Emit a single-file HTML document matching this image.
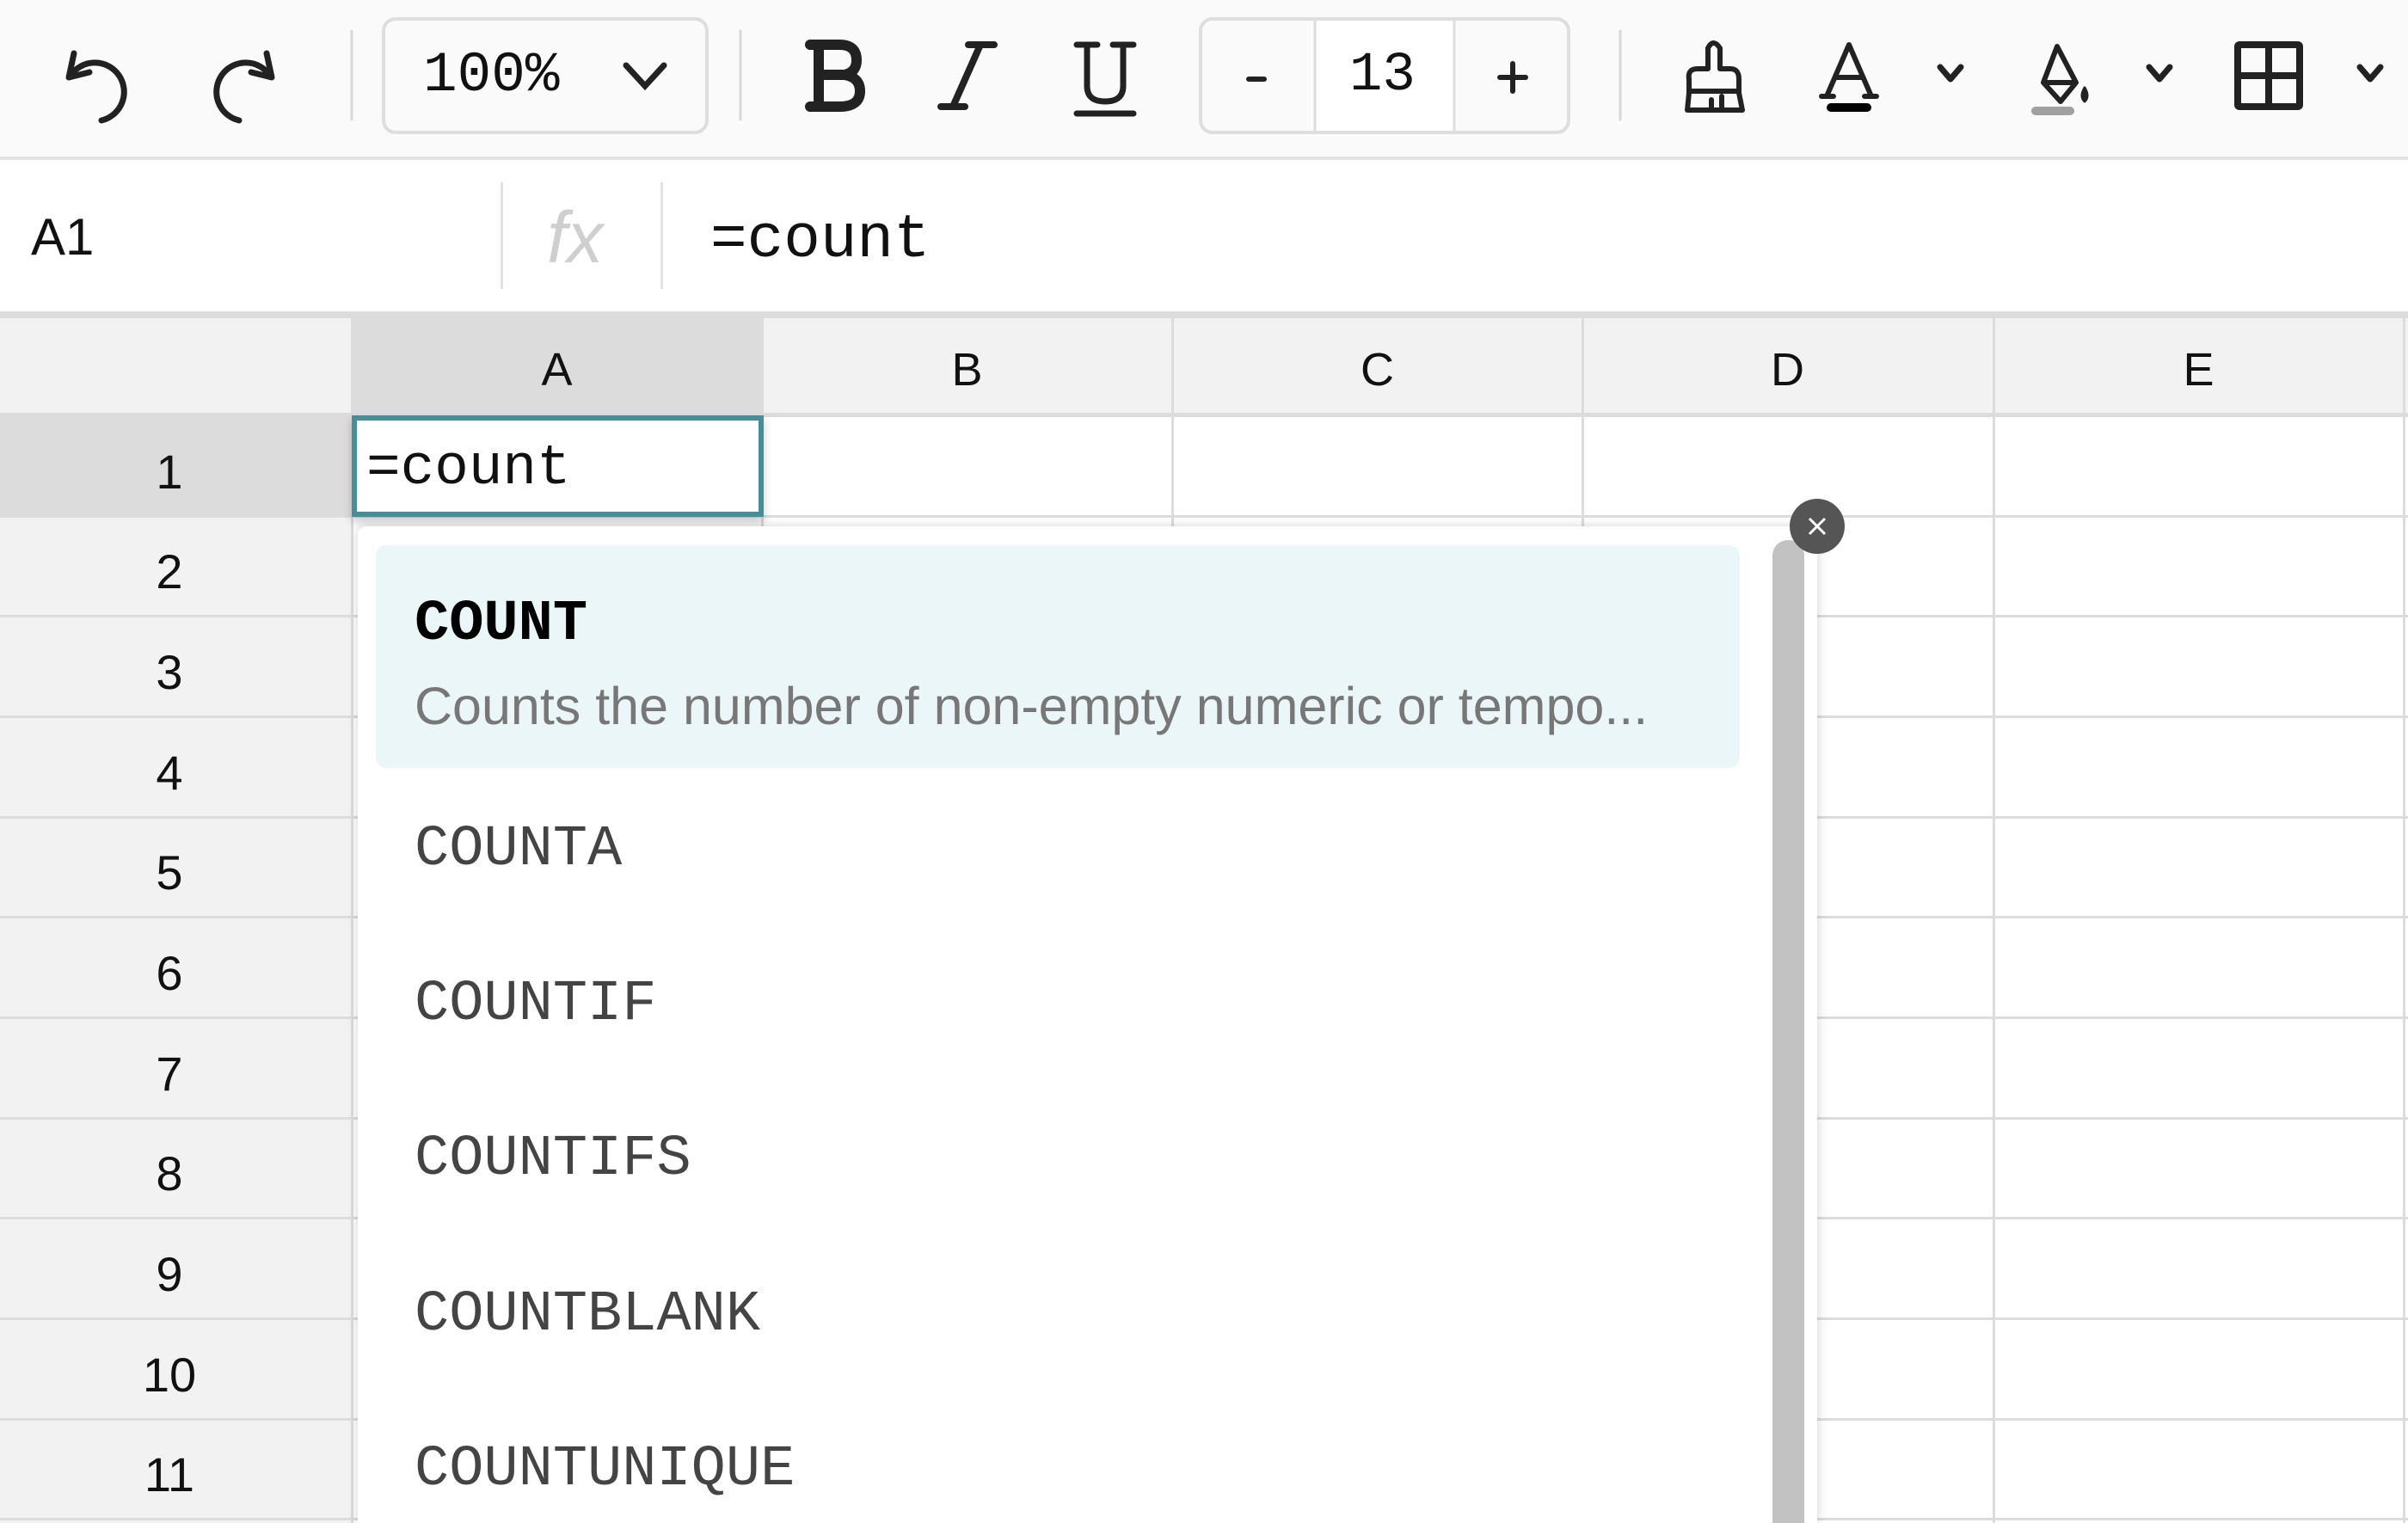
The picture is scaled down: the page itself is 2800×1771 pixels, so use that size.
<!DOCTYPE html>
<html><head><meta charset="utf-8">
<style>
*{margin:0;padding:0;box-sizing:border-box}
html,body{width:2800px;height:1771px;overflow:hidden}
body{background:#fff;position:relative;font-family:"Liberation Sans",sans-serif;color:#111}
.a{position:absolute}
.mono{font-family:"Liberation Mono",monospace}
.vl{position:absolute;width:3px;background:#dcdcdc}
.hl{position:absolute;height:3px;background:#dcdcdc}
.rn{position:absolute;left:0;width:394px;text-align:center;font-size:56px;line-height:116px}
.ch{position:absolute;top:370px;height:113px;line-height:120px;text-align:center;font-size:54px}
.it{position:absolute;left:482px;font-size:67px;color:#444;font-family:"Liberation Mono",monospace}
</style></head><body>
<div class="a" style="left:0;top:0;width:2800px;height:186px;background:#fafafa;border-bottom:4px solid #e2e2e2"></div>
<svg class="a" style="left:0;top:0" width="2800" height="186" fill="none" stroke="#222" stroke-width="7" stroke-linecap="round" stroke-linejoin="round">
 <path d="M86 62 L80 90 L104 84"/><path d="M82 88 A34 34 0 1 1 118 140"/>
 <path d="M310 62 L316 90 L292 84"/><path d="M314 88 A34 34 0 1 0 278 140"/>
 <line x1="409" y1="36" x2="409" y2="139" stroke="#d8d8d8" stroke-width="3"/>
 <line x1="861" y1="36" x2="861" y2="139" stroke="#d8d8d8" stroke-width="3"/>
 <line x1="1884" y1="36" x2="1884" y2="139" stroke="#d8d8d8" stroke-width="3"/>
 <!-- B -->
 <path d="M942 52 L976 52 Q996 52 996 70 Q996 84 982 87 Q1000 90 1000 106 Q1000 124 976 124 L942 124 M952 52 L952 124 M952 87 L980 87" stroke-width="12"/>
 <!-- I -->
 <path d="M1140 52 L1108 124 M1126 52 L1156 52 M1094 124 L1122 124" stroke-width="8"/>
 <!-- U -->
 <path d="M1264 54 L1264 100 Q1264 118 1285 118 Q1306 118 1306 100 L1306 54 M1252 52 L1276 52 M1294 52 L1318 52" stroke-width="7"/>
 <line x1="1252" y1="132" x2="1318" y2="132" stroke-width="7"/>
 <!-- brush -->
 <path d="M1964 108 L1964 92 Q1962 80 1974 80 L1986 80 L1986 56 Q1992 44 2000 56 L2000 80 L2012 80 Q2022 80 2022 92 L2022 108 L2026 128 L1962 128 Z M1964 106 L2022 106 M1990 128 L1990 116 M2002 128 L2002 112" stroke-width="6"/>
 <!-- font color A -->
 <path d="M2124 112 L2150 52 L2176 112 M2134 90 L2166 90 M2118 112 L2132 112 M2168 112 L2182 112" stroke-width="6"/>
 <rect x="2124" y="120" width="52" height="10" rx="5" fill="#000" stroke="none"/>
 <path d="M2256 78 L2268 92 L2280 78"/>
 <!-- fill -->
 <path d="M2392 54 L2414 96 L2396 118 L2376 96 Z M2376 96 L2414 96" stroke-width="6"/>
 <path d="M2424 102 Q2430 112 2424 118 Q2418 112 2424 102" fill="#222" stroke-width="3"/>
 <rect x="2362" y="124" width="50" height="10" rx="5" fill="#a0a0a0" stroke="none"/>
 <path d="M2499 78 L2511 92 L2523 78"/>
 <!-- borders -->
 <rect x="2602" y="52" width="72" height="72" rx="2" stroke-width="8"/><path d="M2638 52 L2638 124 M2602 88 L2674 88" stroke-width="8"/>
 <path d="M2744 78 L2756 92 L2768 78"/>
 <rect x="1396" y="22" width="428" height="132" rx="14" stroke="#dedede" stroke-width="4" fill="#fafafa"/>
 <rect x="1529" y="24" width="162" height="128" fill="#fff" stroke="none"/>
 <line x1="1529" y1="24" x2="1529" y2="152" stroke="#dedede" stroke-width="3"/>
 <line x1="1691" y1="24" x2="1691" y2="152" stroke="#dedede" stroke-width="3"/>
 <path d="M1452 92 L1470 92 M1744 90 L1774 90 M1759 74 L1759 106" stroke-width="6"/>
 <rect x="446" y="22" width="376" height="132" rx="14" stroke="#dedede" stroke-width="4" fill="#fafafa"/>
</svg>
<div class="a mono" style="left:492px;top:44px;font-size:66px;line-height:88px;color:#111">100%</div>
<div class="a mono" style="left:1569px;top:44px;font-size:64px;line-height:88px">13</div>
<svg class="a" style="left:700px;top:60px" width="100" height="60" fill="none" stroke="#222" stroke-width="7" stroke-linecap="round"><path d="M28 16 L50 40 L72 16"/></svg>
<div class="a" style="left:36px;top:236px;font-size:60px;line-height:80px">A1</div>
<div class="vl" style="left:582px;top:212px;height:124px;background:#e2e2e2"></div>
<div class="vl" style="left:768px;top:212px;height:124px;background:#e2e2e2"></div>
<div class="a" style="left:636px;top:226px;font-size:84px;font-style:italic;color:#cfcfcf;line-height:100px">fx</div>
<div class="a mono" style="left:826px;top:236px;font-size:71px;line-height:88px">=count</div>
<div class="a" style="left:0;top:362px;width:2800px;height:8px;background:#dcdcdc"></div>
<div class="a" style="left:0;top:370px;width:2800px;height:113px;background:#f2f2f2"></div>
<div class="a" style="left:409px;top:370px;width:477px;height:113px;background:#dcdcdc"></div>
<div class="a" style="left:0;top:483px;width:409px;height:1288px;background:#f2f2f2"></div>
<div class="a" style="left:0;top:483px;width:409px;height:117px;background:#dcdcdc"></div>
<div class="a" style="left:0;top:480px;width:2800px;height:5px;background:#dcdcdc"></div>
<div class="hl" style="left:0;top:599px;width:2800px"></div>
<div class="hl" style="left:0;top:715px;width:2800px"></div>
<div class="hl" style="left:0;top:832px;width:2800px"></div>
<div class="hl" style="left:0;top:949px;width:2800px"></div>
<div class="hl" style="left:0;top:1065px;width:2800px"></div>
<div class="hl" style="left:0;top:1182px;width:2800px"></div>
<div class="hl" style="left:0;top:1299px;width:2800px"></div>
<div class="hl" style="left:0;top:1415px;width:2800px"></div>
<div class="hl" style="left:0;top:1532px;width:2800px"></div>
<div class="hl" style="left:0;top:1649px;width:2800px"></div>
<div class="hl" style="left:0;top:1765px;width:2800px"></div>
<div class="vl" style="left:408px;top:370px;height:1401px"></div>
<div class="vl" style="left:885px;top:370px;height:1401px"></div>
<div class="vl" style="left:1362px;top:370px;height:1401px"></div>
<div class="vl" style="left:1839px;top:370px;height:1401px"></div>
<div class="vl" style="left:2317px;top:370px;height:1401px"></div>
<div class="vl" style="left:2794px;top:370px;height:1401px"></div>
<div class="ch" style="left:409px;width:477px">A</div>
<div class="ch" style="left:886px;width:477px">B</div>
<div class="ch" style="left:1363px;width:477px">C</div>
<div class="ch" style="left:1840px;width:477px">D</div>
<div class="ch" style="left:2318px;width:477px">E</div>
<div class="rn" style="top:491px">1</div><div class="rn" style="top:607px">2</div><div class="rn" style="top:724px">3</div><div class="rn" style="top:841px">4</div><div class="rn" style="top:957px">5</div><div class="rn" style="top:1074px">6</div><div class="rn" style="top:1191px">7</div><div class="rn" style="top:1307px">8</div><div class="rn" style="top:1424px">9</div><div class="rn" style="top:1541px">10</div><div class="rn" style="top:1657px">11</div>
<div class="a" style="left:409px;top:483px;width:479px;height:118px;border:6px solid #468e9a;background:#fff;box-shadow:0 6px 10px rgba(0,0,0,.2)"></div>
<div class="a mono" style="left:426px;top:505px;font-size:66px;line-height:80px">=count</div>
<div class="a" style="left:416px;top:612px;width:1697px;height:1159px;background:#fff;border-radius:10px 10px 0 0;box-shadow:0 0 12px rgba(0,0,0,.18)"></div>
<div class="a" style="left:437px;top:634px;width:1586px;height:259px;background:#ebf6f8;border-radius:12px"></div>
<div class="a mono" style="left:482px;top:688px;font-size:67px;font-weight:bold;color:#000">COUNT</div>
<div class="a" style="left:482px;top:786px;font-size:61px;color:#777;white-space:nowrap">Counts the number of non-empty numeric or tempo...</div>
<div class="it" style="top:950px">COUNTA</div>
<div class="it" style="top:1130px">COUNTIF</div>
<div class="it" style="top:1310px">COUNTIFS</div>
<div class="it" style="top:1491px">COUNTBLANK</div>
<div class="it" style="top:1671px">COUNTUNIQUE</div>
<div class="a" style="left:2061px;top:628px;width:37px;height:1143px;background:#c2c2c2;border-radius:18px 18px 0 0"></div>
<div class="a" style="left:2081px;top:580px;width:64px;height:64px;border-radius:50%;background:#555"></div>
<svg class="a" style="left:2081px;top:580px" width="64" height="64" stroke="#fff" stroke-width="3"><path d="M23 23 L41 41 M41 23 L23 41"/></svg>
</body></html>
